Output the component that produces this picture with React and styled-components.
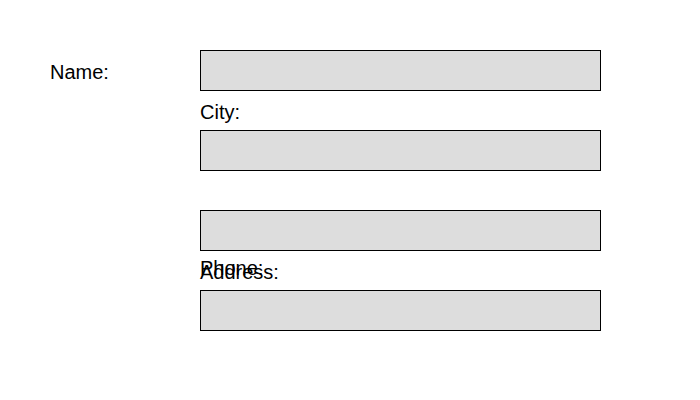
import React from "react";
import styled, { createGlobalStyle } from "styled-components";

const Global = createGlobalStyle`
  html, body { margin: 0; padding: 0; background: #fff; }
  body { font-family: "Liberation Sans", Arial, sans-serif; color: #000; }
`;

const Form = styled.form`
  display: grid;
  grid-template-columns: 150px 401px;
  grid-template-rows: 41px 39px 41px 39px 41px 39px 41px;
  padding: 50px 0 20px 50px;
`;

const Label = styled.label`
  grid-column: ${(p) => p.$col};
  grid-row: ${(p) => p.$row};
  font-size: 20px;
  line-height: 23px;
  padding-top: ${(p) => p.$offset}px;
  white-space: nowrap;
`;

const Field = styled.input`
  grid-column: 2;
  grid-row: ${(p) => p.$row};
  box-sizing: border-box;
  width: 401px;
  height: 41px;
  margin: 0;
  padding: 0 6px;
  border: 1px solid #000;
  border-radius: 0;
  background: #ddd;
  font: inherit;
  font-size: 16px;
  outline: none;
`;

export default function App() {
  return (
    <>
      <Global />
      <Form onSubmit={(e) => e.preventDefault()}>
        <Label $col={1} $row={1} $offset={11}>Name:</Label>
        <Field $row={1} aria-label="Name" />
        <Label $col={2} $row={2} $offset={10}>City:</Label>
        <Field $row={3} aria-label="City" />
        <Field $row={5} aria-label="Phone" />
        <Label $col={2} $row={6} $offset={6}>Phone:</Label>
        <Label $col={2} $row={6} $offset={10}>Address:</Label>
        <Field $row={7} aria-label="Address" />
      </Form>
    </>
  );
}
